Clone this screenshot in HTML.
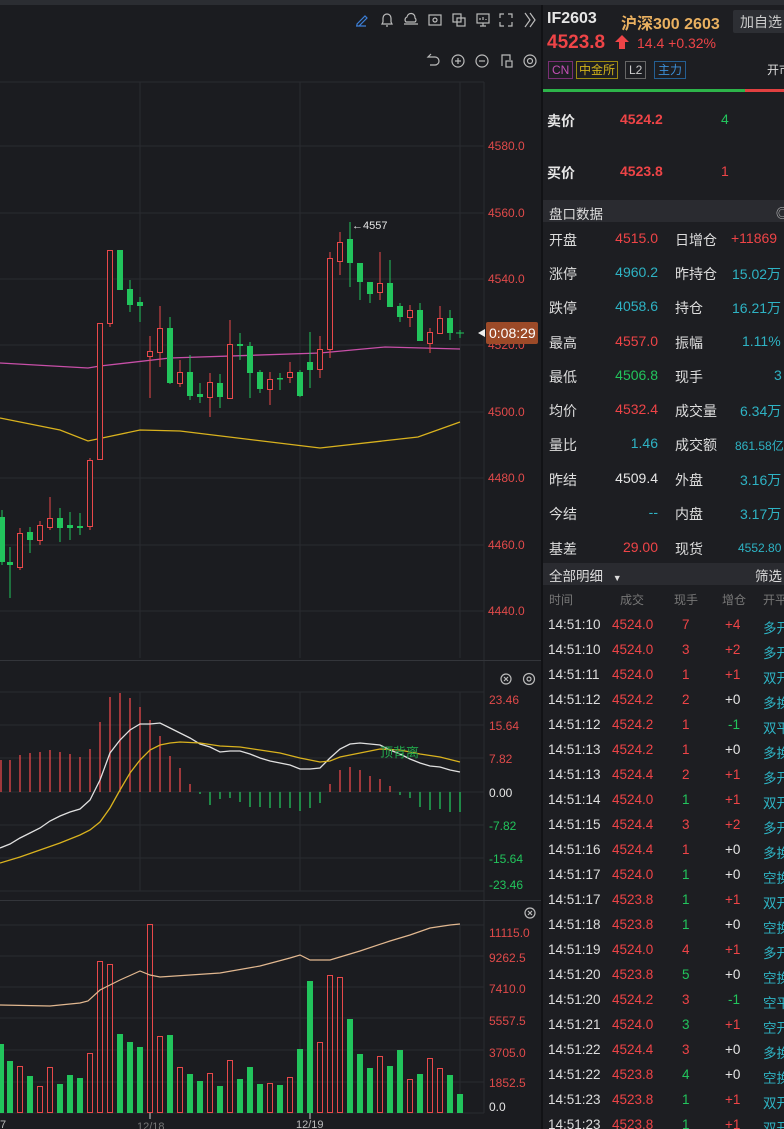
<!DOCTYPE html>
<html><head><meta charset="utf-8"><style>
*{margin:0;padding:0;box-sizing:border-box}
html,body{width:784px;height:1129px;overflow:hidden}
body{background:#1b1c20;font-family:"Liberation Sans","Noto Sans CJK SC",sans-serif;color:#ddd;position:relative}
.a{position:absolute;white-space:nowrap}
.r{color:#ee4447}.g{color:#22c45c}.c{color:#2eb3c4}.w{color:#e6e6e6}
.row{position:absolute;left:542px;width:242px;height:34px;font-size:14px;overflow:hidden}
.row span{position:absolute;top:8px;white-space:nowrap}
.tr{position:absolute;left:542px;width:242px;height:25px;font-size:13.5px;overflow:hidden}
.tr span{position:absolute;top:4px;white-space:nowrap}
</style></head><body>
<div class="a" style="left:0;top:0;width:784px;height:5px;background:#2b2d32"></div>
<svg class="a" style="left:0;top:0" width="542" height="1129">
<g stroke="#2a2b30" stroke-width="1">
<line x1="0" y1="82" x2="484" y2="82"/>
<line x1="0" y1="146" x2="484" y2="146"/><line x1="0" y1="213" x2="484" y2="213"/><line x1="0" y1="279" x2="484" y2="279"/><line x1="0" y1="345" x2="484" y2="345"/><line x1="0" y1="412" x2="484" y2="412"/><line x1="0" y1="478" x2="484" y2="478"/><line x1="0" y1="545" x2="484" y2="545"/><line x1="0" y1="611" x2="484" y2="611"/>
<line x1="140" y1="82" x2="140" y2="658"/><line x1="300" y1="82" x2="300" y2="658"/><line x1="460" y1="82" x2="460" y2="658"/>
<line x1="0" y1="692" x2="484" y2="692"/><line x1="0" y1="725" x2="484" y2="725"/><line x1="0" y1="758" x2="484" y2="758"/><line x1="0" y1="792" x2="484" y2="792"/><line x1="0" y1="825" x2="484" y2="825"/><line x1="0" y1="858" x2="484" y2="858"/><line x1="0" y1="891" x2="484" y2="891"/>
<line x1="140" y1="692" x2="140" y2="891"/><line x1="300" y1="692" x2="300" y2="891"/><line x1="460" y1="692" x2="460" y2="891"/>
<line x1="0" y1="925" x2="484" y2="925"/><line x1="0" y1="956" x2="484" y2="956"/><line x1="0" y1="987" x2="484" y2="987"/><line x1="0" y1="1018" x2="484" y2="1018"/><line x1="0" y1="1050" x2="484" y2="1050"/><line x1="0" y1="1082" x2="484" y2="1082"/><line x1="0" y1="1113" x2="484" y2="1113"/>
<line x1="300" y1="925" x2="300" y2="1113"/><line x1="460" y1="925" x2="460" y2="1113"/>
<line x1="484" y1="82" x2="484" y2="1113"/>
</g>
<g stroke="#33353a"><line x1="0" y1="660.5" x2="542" y2="660.5"/><line x1="0" y1="900.5" x2="542" y2="900.5"/></g>
<polyline fill="none" stroke="#c84fa8" stroke-width="1.3" points="0,363 88,368 100,366 170,358 320,353 385,347 460,349"/>
<polyline fill="none" stroke="#d9b21e" stroke-width="1.3" points="0,418 60,430 88,441 140,430 180,431 320,448 418,437 460,422"/>
<g stroke="#22c45c" stroke-width="1">
<line x1="2" y1="510" x2="2" y2="565"/><line x1="10" y1="547" x2="10" y2="598"/><line x1="30" y1="527" x2="30" y2="553"/><line x1="60" y1="508" x2="60" y2="542"/><line x1="70" y1="512" x2="70" y2="540"/><line x1="80" y1="513" x2="80" y2="535"/><line x1="130" y1="280" x2="130" y2="312"/><line x1="140" y1="297" x2="140" y2="322"/><line x1="170" y1="317" x2="170" y2="384"/><line x1="190" y1="355" x2="190" y2="400"/><line x1="200" y1="383" x2="200" y2="403"/><line x1="220" y1="374" x2="220" y2="408"/><line x1="240" y1="333" x2="240" y2="360"/><line x1="250" y1="342" x2="250" y2="398"/><line x1="260" y1="370" x2="260" y2="393"/><line x1="280" y1="373" x2="280" y2="390"/><line x1="300" y1="370" x2="300" y2="397"/><line x1="310" y1="332" x2="310" y2="388"/><line x1="350" y1="222" x2="350" y2="287"/><line x1="360" y1="263" x2="360" y2="300"/><line x1="370" y1="282" x2="370" y2="303"/><line x1="390" y1="260" x2="390" y2="307"/><line x1="400" y1="303" x2="400" y2="322"/><line x1="420" y1="303" x2="420" y2="341"/><line x1="450" y1="310" x2="450" y2="340"/><line x1="460" y1="330" x2="460" y2="338"/><line x1="456" y1="333" x2="464" y2="333"/>
</g>
<g fill="#22c45c">
<rect x="0" y="517" width="5" height="45"/><rect x="7" y="562" width="6" height="3"/><rect x="27" y="532" width="6" height="8"/><rect x="57" y="518" width="6" height="10"/><rect x="67" y="525" width="6" height="3"/><rect x="77" y="526" width="6" height="2"/><rect x="117" y="250" width="6" height="40"/><rect x="127" y="289" width="6" height="16"/><rect x="137" y="302" width="6" height="4"/><rect x="167" y="328" width="6" height="55"/><rect x="187" y="372" width="6" height="24"/><rect x="197" y="394" width="6" height="3"/><rect x="217" y="383" width="6" height="14"/><rect x="237" y="344" width="6" height="2"/><rect x="247" y="346" width="6" height="27"/><rect x="257" y="372" width="6" height="17"/><rect x="277" y="378" width="6" height="1.5"/><rect x="297" y="372" width="6" height="24"/><rect x="307" y="362" width="6" height="8"/><rect x="347" y="239" width="6" height="24"/><rect x="357" y="263" width="6" height="19"/><rect x="367" y="282" width="6" height="12"/><rect x="387" y="283" width="6" height="24"/><rect x="397" y="306" width="6" height="11"/><rect x="417" y="310" width="6" height="31"/><rect x="447" y="318" width="6" height="15"/>
</g>
<g stroke="#e8484a" stroke-width="1">
<line x1="20" y1="528" x2="20" y2="570"/><line x1="40" y1="521" x2="40" y2="545"/><line x1="50" y1="497" x2="50" y2="530"/><line x1="90" y1="458" x2="90" y2="530"/><line x1="110" y1="250" x2="110" y2="327"/><line x1="150" y1="336" x2="150" y2="398"/><line x1="160" y1="306" x2="160" y2="367"/><line x1="180" y1="360" x2="180" y2="387"/><line x1="210" y1="373" x2="210" y2="417"/><line x1="230" y1="320" x2="230" y2="399"/><line x1="270" y1="372" x2="270" y2="405"/><line x1="290" y1="362" x2="290" y2="383"/><line x1="320" y1="336" x2="320" y2="378"/><line x1="330" y1="252" x2="330" y2="358"/><line x1="340" y1="232" x2="340" y2="275"/><line x1="380" y1="252" x2="380" y2="300"/><line x1="410" y1="305" x2="410" y2="327"/><line x1="430" y1="328" x2="430" y2="353"/><line x1="440" y1="306" x2="440" y2="333"/>
</g>
<g stroke="#e8484a" fill="#1b1c20" stroke-width="1">
<rect x="17.5" y="533.5" width="5" height="34"/><rect x="37.5" y="525.5" width="5" height="15"/><rect x="47.5" y="518.5" width="5" height="9"/><rect x="87.5" y="460.5" width="5" height="66"/><rect x="97.5" y="323.5" width="5" height="136"/><rect x="107.5" y="250.5" width="5" height="73"/><rect x="147.5" y="351.5" width="5" height="5"/><rect x="157.5" y="328.5" width="5" height="24"/><rect x="177.5" y="372.5" width="5" height="11"/><rect x="207.5" y="382.5" width="5" height="15"/><rect x="227.5" y="344.5" width="5" height="54"/><rect x="267.5" y="379.5" width="5" height="10"/><rect x="287.5" y="372.5" width="5" height="5"/><rect x="317.5" y="349.5" width="5" height="20"/><rect x="327.5" y="258.5" width="5" height="91"/><rect x="337.5" y="242.5" width="5" height="19"/><rect x="377.5" y="283.5" width="5" height="9"/><rect x="407.5" y="310.5" width="5" height="7"/><rect x="427.5" y="332.5" width="5" height="11"/><rect x="437.5" y="318.5" width="5" height="15"/>
</g>
<text x="352" y="229" fill="#e6e6e6" font-size="11" font-family="Liberation Sans">←4557</text>
<g fill="#e04a4a" font-size="12" font-family="Liberation Sans">
<text x="488" y="150">4580.0</text><text x="488" y="217">4560.0</text><text x="488" y="283">4540.0</text><text x="488" y="349">4520.0</text><text x="488" y="416">4500.0</text><text x="488" y="482">4480.0</text><text x="488" y="549">4460.0</text><text x="488" y="615">4440.0</text>
</g>
<polygon points="478,333 485,329 485,337" fill="#eee"/>
<rect x="486" y="322" width="52" height="22" rx="2" fill="#9c4a28"/>
<text x="489" y="338" fill="#fff" font-size="14" font-family="Liberation Sans">0:08:29</text>
<g stroke="#e8484a" stroke-width="1.3">
<line x1="1" y1="760" x2="1" y2="792"/><line x1="10" y1="760" x2="10" y2="792"/><line x1="20" y1="755" x2="20" y2="792"/><line x1="30" y1="753" x2="30" y2="792"/><line x1="40" y1="752" x2="40" y2="792"/><line x1="50" y1="750" x2="50" y2="792"/><line x1="60" y1="752" x2="60" y2="792"/><line x1="70" y1="754" x2="70" y2="792"/><line x1="80" y1="757" x2="80" y2="792"/><line x1="90" y1="749" x2="90" y2="792"/><line x1="100" y1="722" x2="100" y2="792"/><line x1="110" y1="697" x2="110" y2="792"/><line x1="120" y1="693" x2="120" y2="792"/><line x1="130" y1="698" x2="130" y2="792"/><line x1="140" y1="707" x2="140" y2="792"/><line x1="150" y1="720" x2="150" y2="792"/><line x1="160" y1="736" x2="160" y2="792"/><line x1="170" y1="756" x2="170" y2="792"/><line x1="180" y1="768" x2="180" y2="792"/><line x1="190" y1="784" x2="190" y2="792"/>
<line x1="330" y1="784" x2="330" y2="792"/><line x1="340" y1="770" x2="340" y2="792"/><line x1="350" y1="767" x2="350" y2="792"/><line x1="360" y1="770" x2="360" y2="792"/><line x1="370" y1="776" x2="370" y2="792"/><line x1="380" y1="779" x2="380" y2="792"/><line x1="390" y1="786" x2="390" y2="792"/>
</g>
<g stroke="#22c45c" stroke-width="1.3">
<line x1="200" y1="792" x2="200" y2="794"/><line x1="210" y1="792" x2="210" y2="805"/><line x1="220" y1="792" x2="220" y2="799"/><line x1="230" y1="792" x2="230" y2="798"/><line x1="240" y1="792" x2="240" y2="802"/><line x1="250" y1="792" x2="250" y2="807"/><line x1="260" y1="792" x2="260" y2="807"/><line x1="270" y1="792" x2="270" y2="808"/><line x1="280" y1="792" x2="280" y2="808"/><line x1="290" y1="792" x2="290" y2="808"/><line x1="300" y1="792" x2="300" y2="811"/><line x1="310" y1="792" x2="310" y2="808"/><line x1="320" y1="792" x2="320" y2="803"/>
<line x1="400" y1="792" x2="400" y2="795"/><line x1="410" y1="792" x2="410" y2="798"/><line x1="420" y1="792" x2="420" y2="807"/><line x1="430" y1="792" x2="430" y2="810"/><line x1="440" y1="792" x2="440" y2="809"/><line x1="450" y1="792" x2="450" y2="812"/><line x1="460" y1="792" x2="460" y2="812"/>
</g>
<polyline fill="none" stroke="#e0e0e0" stroke-width="1.3" points="0,848 10,844 20,838 30,833 40,828 50,821 60,816 70,812 80,809 90,800 100,780 110,753 120,740 130,730 140,724 150,724 160,723 170,728 180,733 190,738 200,744 210,747 220,752 230,751 240,751 250,754 260,758 270,761 280,763 290,765 300,769 310,769 320,768 330,758 340,749 350,744 360,743 370,744 380,745 390,750 400,754 410,759 420,763 430,766 440,767 450,770 460,772"/>
<polyline fill="none" stroke="#d9b21e" stroke-width="1.3" points="0,863 20,857 40,850 60,843 80,835 90,830 100,822 110,808 120,790 130,773 140,760 150,750 160,745 170,743 180,742 200,743 220,746 240,747 260,750 280,753 300,758 320,762 330,761 340,757 360,753 380,749 400,750 420,754 440,757 460,762"/>
<text x="380" y="757" fill="#22a84c" font-size="13" font-family="Liberation Sans, Noto Sans CJK SC, sans-serif">顶背离</text>
<g font-size="12" font-family="Liberation Sans">
<text x="489" y="704" fill="#e04a4a">23.46</text><text x="489" y="730" fill="#e04a4a">15.64</text><text x="489" y="763" fill="#e04a4a">7.82</text><text x="489" y="797" fill="#e6e6e6">0.00</text><text x="489" y="830" fill="#22c45c">-7.82</text><text x="489" y="863" fill="#22c45c">-15.64</text><text x="489" y="889" fill="#22c45c">-23.46</text>
</g>
<g fill="#22c45c">
<rect x="0" y="1044" width="4" height="69"/><rect x="7" y="1061" width="6" height="52"/><rect x="27" y="1076" width="6" height="37"/><rect x="57" y="1084" width="6" height="29"/><rect x="67" y="1075" width="6" height="38"/><rect x="77" y="1078" width="6" height="35"/><rect x="117" y="1034" width="6" height="79"/><rect x="127" y="1042" width="6" height="71"/><rect x="137" y="1047" width="6" height="66"/><rect x="167" y="1035" width="6" height="78"/><rect x="187" y="1074" width="6" height="39"/><rect x="197" y="1081" width="6" height="32"/><rect x="217" y="1086" width="6" height="27"/><rect x="237" y="1079" width="6" height="34"/><rect x="247" y="1067" width="6" height="46"/><rect x="257" y="1084" width="6" height="29"/><rect x="277" y="1085" width="6" height="28"/><rect x="297" y="1049" width="6" height="64"/><rect x="307" y="981" width="6" height="132"/><rect x="347" y="1019" width="6" height="94"/><rect x="357" y="1054" width="6" height="59"/><rect x="367" y="1068" width="6" height="45"/><rect x="387" y="1066" width="6" height="47"/><rect x="397" y="1050" width="6" height="63"/><rect x="417" y="1074" width="6" height="39"/><rect x="447" y="1075" width="6" height="38"/><rect x="457" y="1094" width="6" height="19"/>
</g>
<g stroke="#e8484a" fill="none">
<rect x="17.5" y="1066.5" width="5" height="46"/><rect x="37.5" y="1086.5" width="5" height="26"/><rect x="47.5" y="1067.5" width="5" height="45"/><rect x="87.5" y="1053.5" width="5" height="59"/><rect x="97.5" y="961.5" width="5" height="151"/><rect x="107.5" y="964.5" width="5" height="148"/><rect x="147.5" y="924.5" width="5" height="188"/><rect x="157.5" y="1036.5" width="5" height="76"/><rect x="177.5" y="1067.5" width="5" height="45"/><rect x="207.5" y="1073.5" width="5" height="39"/><rect x="227.5" y="1060.5" width="5" height="52"/><rect x="267.5" y="1083.5" width="5" height="29"/><rect x="287.5" y="1077.5" width="5" height="35"/><rect x="317.5" y="1042.5" width="5" height="70"/><rect x="327.5" y="975.5" width="5" height="137"/><rect x="337.5" y="977.5" width="5" height="135"/><rect x="377.5" y="1056.5" width="5" height="56"/><rect x="407.5" y="1079.5" width="5" height="33"/><rect x="427.5" y="1058.5" width="5" height="54"/><rect x="437.5" y="1068.5" width="5" height="44"/>
</g>
<polyline fill="none" stroke="#e2b890" stroke-width="1.2" points="0,1005 50,1006 80,1003 88,1001 100,990 120,980 140,971 150,975 160,977 220,973 260,966 290,958 300,955 310,960 330,960 360,951 390,941 410,935 430,928 450,925 460,924"/>
<g font-size="12" font-family="Liberation Sans" fill="#e04a4a">
<text x="489" y="937">11115.0</text><text x="489" y="962">9262.5</text><text x="489" y="993">7410.0</text><text x="489" y="1025">5557.5</text><text x="489" y="1057">3705.0</text><text x="489" y="1087">1852.5</text><text x="489" y="1111" fill="#e6e6e6">0.0</text>
</g>
<g stroke="#ccc"><line x1="150" y1="1113" x2="150" y2="1119"/><line x1="310" y1="1113" x2="310" y2="1119"/></g>
<g fill="#bbb" font-size="11" font-family="Liberation Sans"><text x="0" y="1128">7</text><text x="137" y="1130" fill="#777">12/18</text><text x="296" y="1128">12/19</text></g>
<g fill="none" stroke="#bbb" stroke-width="1.2">
<path d="M357,24 l8,-8 l2,2 l-8,8 h-2 z M356,26 h10" stroke="#3d7fd8"/>
<path d="M383,22 v-4 a4,4 0 0 1 8,0 v4 l1,2 h-10 z M386,26 h2"/>
<path d="M406,22 a3,3 0 0 1 1,-5 a4,4 0 0 1 8,1 a2.5,2.5 0 0 1 0,4 z M404,24 h14"/>
<rect x="429" y="15" width="12" height="10"/><circle cx="435" cy="20" r="2"/>
<rect x="453" y="14" width="8" height="8"/><rect x="457" y="18" width="8" height="8"/>
<rect x="477" y="14" width="12" height="9"/><path d="M480,26 h6 M483,23 v3 M480,20 v-2 M483,20 v-3 M486,20 v-1"/>
<path d="M500,18 v-4 h4 M508,14 h4 v4 M512,22 v4 h-4 M504,26 h-4 v-4"/>
<path d="M525,13 l5,7 l-5,7 M530,13 l5,7 l-5,7"/>
<path d="M430,57 h-2 l3,-3 M428,57 h7 a4,4 0 0 1 0,8 h-5"/>
<circle cx="458" cy="61" r="6"/><path d="M455,61 h6 M458,58 v6"/>
<circle cx="482" cy="61" r="6"/><path d="M479,61 h6"/>
<path d="M502,66 v-11 h8 v5"/><rect x="506" y="61" width="6" height="6"/>
<circle cx="530" cy="61" r="6"/><circle cx="530" cy="61" r="2.5"/>
<circle cx="506" cy="679" r="5"/><path d="M504,677 l4,4 M508,677 l-4,4"/>
<circle cx="529" cy="679" r="5.5"/><circle cx="529" cy="679" r="2"/>
<circle cx="530" cy="913" r="5"/><path d="M528,911 l4,4 M532,911 l-4,4"/>
</g>
</svg>
<div class="a" style="left:541px;top:5px;width:2px;height:1124px;background:#111215"></div>
<div class="a" style="left:543px;top:5px;width:241px;height:1124px;background:#1d1e22"></div>
<div class="a w" style="left:547px;top:10px;font-size:16px;font-weight:bold">IF2603</div>
<div class="a" style="left:621px;top:10px;font-size:16px;font-weight:bold;color:#e9b060">沪深300 2603</div>
<div class="a" style="left:733px;top:10px;width:60px;height:23px;background:#2d2f34;border-radius:2px;font-size:14px;color:#ccc;padding:2px 0 0 7px">加自选</div>
<div class="a r" style="left:547px;top:32px;font-size:19px;font-weight:bold">4523.8</div>
<svg class="a" style="left:615px;top:35px" width="14" height="15"><path d="M7,0 L14,7 H10 V14 H4 V7 H0 Z" fill="#ee4447"/></svg>
<div class="a r" style="left:637px;top:35px;font-size:14px">14.4 +0.32%</div>
<div class="a" style="left:548px;top:61px;height:18px;border:1px solid #7a2f74;color:#c24fb4;font-size:12px;padding:0 3px;line-height:16px">CN</div>
<div class="a" style="left:576px;top:61px;height:18px;border:1px solid #9c8a12;color:#d2b31a;font-size:12px;padding:0 2px;line-height:16px">中金所</div>
<div class="a" style="left:625px;top:61px;height:18px;border:1px solid #666;color:#ccc;font-size:12px;padding:0 3px;line-height:16px">L2</div>
<div class="a" style="left:654px;top:61px;height:18px;border:1px solid #245e92;color:#3c8fd8;font-size:12px;padding:0 3px;line-height:16px">主力</div>
<div class="a" style="left:767px;top:61px;font-size:12px;color:#ddd">开市</div>
<div class="a" style="left:543px;top:89px;width:202px;height:3px;background:#2db44a"></div>
<div class="a" style="left:745px;top:89px;width:39px;height:3px;background:#e04040"></div>
<div class="a w" style="left:547px;top:111px;font-size:14px;font-weight:bold">卖价</div>
<div class="a r" style="left:620px;top:111px;font-size:14px;font-weight:bold">4524.2</div>
<div class="a g" style="left:721px;top:111px;font-size:14px">4</div>
<div class="a w" style="left:547px;top:163px;font-size:14px;font-weight:bold">买价</div>
<div class="a r" style="left:620px;top:163px;font-size:14px;font-weight:bold">4523.8</div>
<div class="a r" style="left:721px;top:163px;font-size:14px">1</div>
<div class="a" style="left:543px;top:200px;width:241px;height:22px;background:#2a2b30"></div>
<div class="a" style="left:549px;top:203px;font-size:13.5px;color:#ddd">盘口数据</div>
<div class="a" style="left:776px;top:203px;font-size:13px;color:#ccc">◎</div>

<div class="row" style="top:222px"><span style="left:7px">开盘</span><span class="r" style="right:126px">4515.0</span><span style="left:133px">日增仓</span><span class="r" style="left:189px">+11869</span></div>
<div class="row" style="top:256px"><span style="left:7px">涨停</span><span class="c" style="right:126px">4960.2</span><span style="left:133px">昨持仓</span><span class="c" style="left:190px">15.02万</span></div>
<div class="row" style="top:290px"><span style="left:7px">跌停</span><span class="c" style="right:126px">4058.6</span><span style="left:133px">持仓</span><span class="c" style="left:190px">16.21万</span></div>
<div class="row" style="top:325px"><span style="left:7px">最高</span><span class="r" style="right:126px">4557.0</span><span style="left:133px">振幅</span><span class="c" style="left:200px">1.11%</span></div>
<div class="row" style="top:359px"><span style="left:7px">最低</span><span class="g" style="right:126px">4506.8</span><span style="left:133px">现手</span><span class="c" style="left:232px">3</span></div>
<div class="row" style="top:393px"><span style="left:7px">均价</span><span class="r" style="right:126px">4532.4</span><span style="left:133px">成交量</span><span class="c" style="left:198px">6.34万</span></div>
<div class="row" style="top:427px"><span style="left:7px">量比</span><span class="c" style="right:126px">1.46</span><span style="left:133px">成交额</span><span class="c" style="left:193px;font-size:12px;top:10px">861.58亿</span></div>
<div class="row" style="top:462px"><span style="left:7px">昨结</span><span class="w" style="right:126px">4509.4</span><span style="left:133px">外盘</span><span class="c" style="left:198px">3.16万</span></div>
<div class="row" style="top:496px"><span style="left:7px">今结</span><span class="c" style="right:126px">--</span><span style="left:133px">内盘</span><span class="c" style="left:198px">3.17万</span></div>
<div class="row" style="top:531px"><span style="left:7px">基差</span><span class="r" style="right:126px">29.00</span><span style="left:133px">现货</span><span class="c" style="left:196px;font-size:12px;top:10px">4552.80</span></div>

<div class="a" style="left:543px;top:563px;width:241px;height:22px;background:#2a2b30"></div>
<div class="a" style="left:549px;top:565px;font-size:13.5px;color:#ddd">全部明细 <span style="font-size:9px;margin-left:6px">▼</span></div>
<div class="a" style="left:755px;top:565px;font-size:13.5px;color:#ddd">筛选</div>
<div class="a" style="left:549px;top:591px;font-size:12px;color:#777">时间</div>
<div class="a" style="left:620px;top:591px;font-size:12px;color:#777">成交</div>
<div class="a" style="left:674px;top:591px;font-size:12px;color:#777">现手</div>
<div class="a" style="left:722px;top:591px;font-size:12px;color:#777">增仓</div>
<div class="a" style="left:763px;top:591px;font-size:12px;color:#777">开平</div>

<div class="tr" style="top:613px"><span style="left:6px">14:51:10</span><span class="r" style="left:70px">4524.0</span><span class="r" style="left:140px">7</span><span class="r" style="left:183px">+4</span><span class="c" style="left:221px">多开</span></div>
<div class="tr" style="top:638px"><span style="left:6px">14:51:10</span><span class="r" style="left:70px">4524.0</span><span class="r" style="left:140px">3</span><span class="r" style="left:183px">+2</span><span class="c" style="left:221px">多开</span></div>
<div class="tr" style="top:663px"><span style="left:6px">14:51:11</span><span class="r" style="left:70px">4524.0</span><span class="r" style="left:140px">1</span><span class="r" style="left:183px">+1</span><span class="c" style="left:221px">双开</span></div>
<div class="tr" style="top:688px"><span style="left:6px">14:51:12</span><span class="r" style="left:70px">4524.2</span><span class="r" style="left:140px">2</span><span class="w" style="left:183px">+0</span><span class="c" style="left:221px">多换</span></div>
<div class="tr" style="top:713px"><span style="left:6px">14:51:12</span><span class="r" style="left:70px">4524.2</span><span class="r" style="left:140px">1</span><span class="g" style="left:186px">-1</span><span class="c" style="left:221px">双平</span></div>
<div class="tr" style="top:738px"><span style="left:6px">14:51:13</span><span class="r" style="left:70px">4524.2</span><span class="r" style="left:140px">1</span><span class="w" style="left:183px">+0</span><span class="c" style="left:221px">多换</span></div>
<div class="tr" style="top:763px"><span style="left:6px">14:51:13</span><span class="r" style="left:70px">4524.4</span><span class="r" style="left:140px">2</span><span class="r" style="left:183px">+1</span><span class="c" style="left:221px">多开</span></div>
<div class="tr" style="top:788px"><span style="left:6px">14:51:14</span><span class="r" style="left:70px">4524.0</span><span class="g" style="left:140px">1</span><span class="r" style="left:183px">+1</span><span class="c" style="left:221px">双开</span></div>
<div class="tr" style="top:813px"><span style="left:6px">14:51:15</span><span class="r" style="left:70px">4524.4</span><span class="r" style="left:140px">3</span><span class="r" style="left:183px">+2</span><span class="c" style="left:221px">多开</span></div>
<div class="tr" style="top:838px"><span style="left:6px">14:51:16</span><span class="r" style="left:70px">4524.4</span><span class="r" style="left:140px">1</span><span class="w" style="left:183px">+0</span><span class="c" style="left:221px">多换</span></div>
<div class="tr" style="top:863px"><span style="left:6px">14:51:17</span><span class="r" style="left:70px">4524.0</span><span class="g" style="left:140px">1</span><span class="w" style="left:183px">+0</span><span class="c" style="left:221px">空换</span></div>
<div class="tr" style="top:888px"><span style="left:6px">14:51:17</span><span class="r" style="left:70px">4523.8</span><span class="g" style="left:140px">1</span><span class="r" style="left:183px">+1</span><span class="c" style="left:221px">双开</span></div>
<div class="tr" style="top:913px"><span style="left:6px">14:51:18</span><span class="r" style="left:70px">4523.8</span><span class="g" style="left:140px">1</span><span class="w" style="left:183px">+0</span><span class="c" style="left:221px">空换</span></div>
<div class="tr" style="top:938px"><span style="left:6px">14:51:19</span><span class="r" style="left:70px">4524.0</span><span class="r" style="left:140px">4</span><span class="r" style="left:183px">+1</span><span class="c" style="left:221px">多开</span></div>
<div class="tr" style="top:963px"><span style="left:6px">14:51:20</span><span class="r" style="left:70px">4523.8</span><span class="g" style="left:140px">5</span><span class="w" style="left:183px">+0</span><span class="c" style="left:221px">空换</span></div>
<div class="tr" style="top:988px"><span style="left:6px">14:51:20</span><span class="r" style="left:70px">4524.2</span><span class="r" style="left:140px">3</span><span class="g" style="left:186px">-1</span><span class="c" style="left:221px">空平</span></div>
<div class="tr" style="top:1013px"><span style="left:6px">14:51:21</span><span class="r" style="left:70px">4524.0</span><span class="g" style="left:140px">3</span><span class="r" style="left:183px">+1</span><span class="c" style="left:221px">空开</span></div>
<div class="tr" style="top:1038px"><span style="left:6px">14:51:22</span><span class="r" style="left:70px">4524.4</span><span class="r" style="left:140px">3</span><span class="w" style="left:183px">+0</span><span class="c" style="left:221px">多换</span></div>
<div class="tr" style="top:1063px"><span style="left:6px">14:51:22</span><span class="r" style="left:70px">4523.8</span><span class="g" style="left:140px">4</span><span class="w" style="left:183px">+0</span><span class="c" style="left:221px">空换</span></div>
<div class="tr" style="top:1088px"><span style="left:6px">14:51:23</span><span class="r" style="left:70px">4523.8</span><span class="g" style="left:140px">1</span><span class="r" style="left:183px">+1</span><span class="c" style="left:221px">双开</span></div>
<div class="tr" style="top:1113px"><span style="left:6px">14:51:23</span><span class="r" style="left:70px">4523.8</span><span class="g" style="left:140px">1</span><span class="r" style="left:183px">+1</span><span class="c" style="left:221px">双开</span></div>
</body></html>
